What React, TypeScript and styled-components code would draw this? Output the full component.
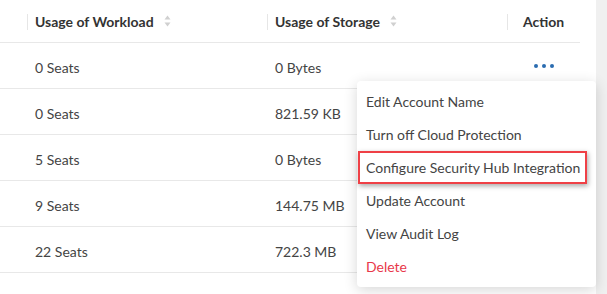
import { Fragment } from "react";
import { createGlobalStyle, styled } from "styled-components";

const GlobalStyle = createGlobalStyle`
  html, body {
    margin: 0;
    padding: 0;
    background: #f0f0f0;
    font-family: Lato, "Open Sans", Arial, sans-serif;
  }
`;

const Page = styled.div`
  display: flex;
  width: 607px;
  height: 294px;
  overflow: hidden;
`;

const Panel = styled.div`
  position: relative;
  width: 596px;
  background: #fff;
`;

const Table = styled.div`
  width: 580px;
  display: grid;
  grid-template-columns: 27px 240px 240px 73px;
`;

const HeadCell = styled.div<{ $center?: boolean }>`
  position: relative;
  height: 42px;
  display: flex;
  align-items: center;
  justify-content: ${(p) => (p.$center ? "center" : "flex-start")};
  padding-left: ${(p) => (p.$center ? "0" : "8px")};
  border-bottom: 1px solid #e8e8e8;
  font-size: 14px;
  font-weight: 700;
  color: #333;

  &::before {
    content: "";
    position: absolute;
    left: 0;
    top: 14px;
    width: 1px;
    height: 16px;
    background: #e6e6e6;
  }

  &:first-child::before {
    display: none;
  }
`;

const Cell = styled.div<{ $center?: boolean }>`
  height: 46px;
  display: flex;
  align-items: center;
  justify-content: ${(p) => (p.$center ? "center" : "flex-start")};
  padding: 3px 0 0 ${(p) => (p.$center ? "0" : "8px")};
  box-sizing: border-box;
  border-bottom: 1px solid #e8e8e8;
  font-size: 14px;
  color: #444;
`;

const SortIcon = styled.svg`
  margin-left: 10px;
  width: 7px;
  height: 12px;
`;

const Dots = styled.div`
  display: flex;
  gap: 4px;
  margin-top: -3px;

  & > span {
    width: 4px;
    height: 4px;
    border-radius: 50%;
    background: #2b6cb0;
  }
`;

const Menu = styled.div`
  position: absolute;
  left: 357px;
  top: 81px;
  width: 239px;
  padding: 4px 0;
  background: #fff;
  border-radius: 4px;
  box-shadow: 0 3px 14px rgba(0, 0, 0, 0.16);
`;

const Item = styled.div<{ $danger?: boolean; $marked?: boolean }>`
  height: 33px;
  display: flex;
  align-items: center;
  box-sizing: border-box;
  padding-left: 9px;
  font-size: 14px;
  color: ${(p) => (p.$danger ? "#e8384a" : "#444")};

  ${(p) =>
    p.$marked &&
    `
    margin: 0 9px 0 1px;
    padding-left: 6px;
    border: 2px solid #ef4046;
    box-shadow: 1px 2px 5px rgba(0, 0, 0, 0.35);
  `}
`;

const Fill = styled.div`
  flex: 1;
  background: #f0f0f0;
`;

const rows = [
  { seats: "0 Seats", storage: "0 Bytes", dots: true },
  { seats: "0 Seats", storage: "821.59 KB" },
  { seats: "5 Seats", storage: "0 Bytes" },
  { seats: "9 Seats", storage: "144.75 MB" },
  { seats: "22 Seats", storage: "722.3 MB" },
];

const menuItems = [
  { label: "Edit Account Name" },
  { label: "Turn off Cloud Protection" },
  { label: "Configure Security Hub Integration", marked: true },
  { label: "Update Account" },
  { label: "View Audit Log" },
  { label: "Delete", danger: true },
];

function Sort() {
  return (
    <SortIcon viewBox="0 0 7 12">
      <path d="M3.5 0.5 L6.5 4.5 H0.5 Z" fill="#d0d0d0" />
      <path d="M3.5 11.5 L6.5 7.5 H0.5 Z" fill="#d0d0d0" />
    </SortIcon>
  );
}

export default function App() {
  return (
    <>
      <GlobalStyle />
      <Page>
        <Panel>
          <Table>
            <HeadCell />
            <HeadCell>
              Usage of Workload
              <Sort />
            </HeadCell>
            <HeadCell>
              Usage of Storage
              <Sort />
            </HeadCell>
            <HeadCell $center>Action</HeadCell>
            {rows.map((row, i) => (
              <Fragment key={i}>
                <Cell />
                <Cell>{row.seats}</Cell>
                <Cell>{row.storage}</Cell>
                <Cell $center>
                  {row.dots && (
                    <Dots>
                      <span />
                      <span />
                      <span />
                    </Dots>
                  )}
                </Cell>
              </Fragment>
            ))}
          </Table>
          <Menu>
            {menuItems.map((item) => (
              <Item key={item.label} $marked={item.marked} $danger={item.danger}>
                {item.label}
              </Item>
            ))}
          </Menu>
        </Panel>
        <Fill />
      </Page>
    </>
  );
}
